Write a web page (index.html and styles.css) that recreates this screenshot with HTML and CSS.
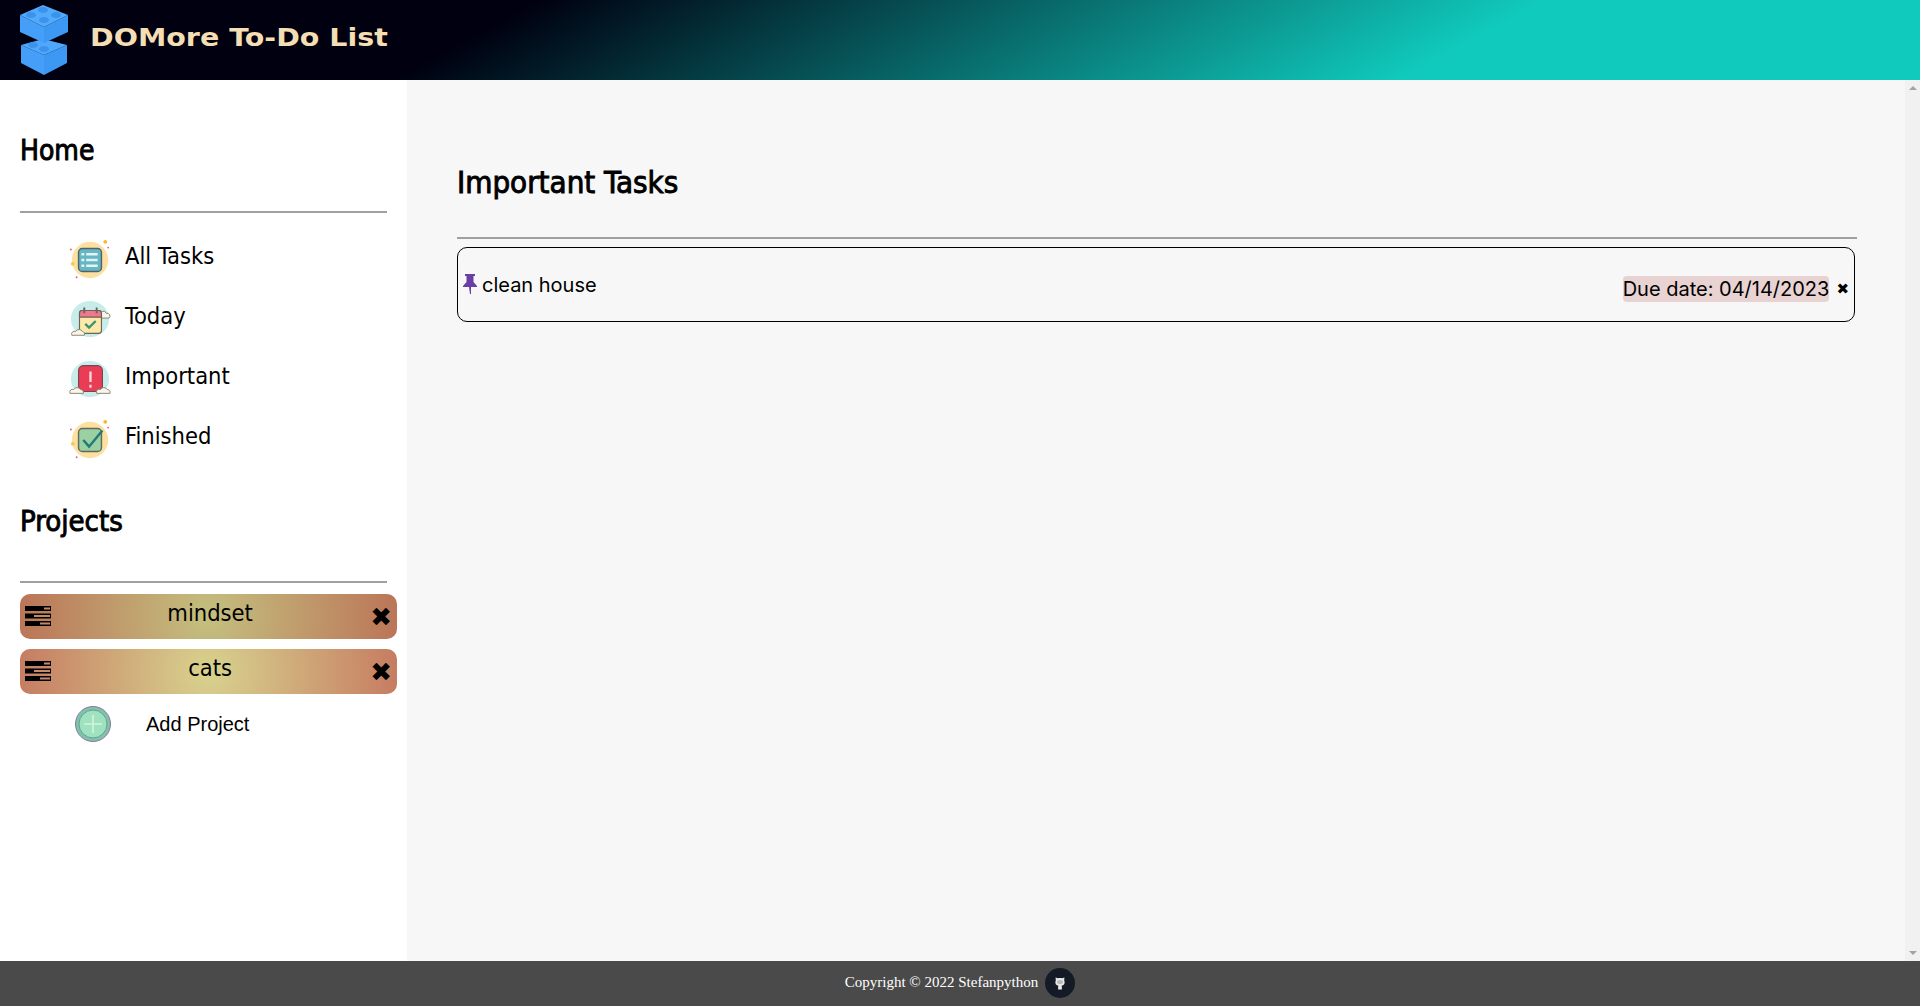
FILE: index.html
```html
<!DOCTYPE html>
<html lang="en">
<head>
    <meta charset="UTF-8">
    <title>DOMore To-Do List</title>
    <link rel="stylesheet" href="styles.css">
</head>
<body>

<!-- Header -->
<header class="header">
    <svg class="logo" viewBox="0 0 48 70" aria-hidden="true">
        <!-- Khoi duoi -->
        <path fill="#4fa8fb" d="M1 40 L23 34 L47 40 L24 50 Z"/>
        <path fill="#459ff8" d="M1 40 L24 50 V70 L1 58 Z"/>
        <path fill="#3d98f4" d="M47 40 L24 50 V70 L47 58 Z"/>
        <ellipse cx="13" cy="40" rx="5" ry="3" fill="#3b93ee"/>
        <ellipse cx="24" cy="44" rx="5" ry="3" fill="#3b93ee"/>
        <!-- Khoi tren -->
        <path fill="#459ff8" d="M0 10 L24 22 V38 L0 27 Z"/>
        <path fill="#3d98f4" d="M48 10 L24 22 V38 L48 27 Z"/>
        <path fill="#52aafb" d="M0 10 L23 0 L48 10 L24 22 Z"/>
        <ellipse cx="23" cy="5" rx="5" ry="3" fill="#3b93ee"/>
        <ellipse cx="11" cy="10" rx="5" ry="3" fill="#3b93ee"/>
        <ellipse cx="36" cy="10" rx="5" ry="3" fill="#3b93ee"/>
        <ellipse cx="24" cy="15" rx="5" ry="3" fill="#3b93ee"/>
    </svg>
    <h1 class="site-title">DOMore To-Do List</h1>
</header>

<div class="layout">
    <!-- Sidebar -->
    <nav class="sidebar">
        <h2 class="side-heading">Home</h2>
        <hr class="rule">
        <ul class="menu">
            <li class="menu-item">
                <svg class="menu-icon" viewBox="0 0 44 44">
                    <circle cx="22" cy="22" r="19" fill="#fde09f"/>
                    <circle cx="38" cy="3" r="2" fill="#f9b82a"/><circle cx="41" cy="9" r="1" fill="#ee5a72"/><circle cx="2" cy="11" r="1" fill="#ee5a72"/><circle cx="4" cy="26" r="2" fill="#f9c84a"/><circle cx="8" cy="40" r="1" fill="#ee5a72"/>
                    <rect x="10" y="10" width="24" height="24" rx="4" fill="#65b7c4" stroke="#53616b" stroke-width="1.5"/>
                    <path d="M18 16H30M18 22H30M18 28H30" stroke="#e4f4f4" stroke-width="2.5"/>
                    <path d="M13 16H16M13 22H16M13 28H16" stroke="#e4f4f4" stroke-width="2.5"/>
                </svg>
                <span>All Tasks</span>
            </li>
            <li class="menu-item">
                <svg class="menu-icon" viewBox="0 0 44 44">
                    <ellipse cx="22" cy="21" rx="20" ry="19" fill="#c7ecea"/>
                    <path d="M33 17a3 3 0 0 1 6-2 3 3 0 0 1 3 5H33Z" fill="#f8f6ea" stroke="#8a8270"/>
                    <rect x="11" y="12" width="23" height="24" rx="3" fill="#fdeaa8" stroke="#6b6458" stroke-width="1.2"/>
                    <path d="M11 19V15a3 3 0 0 1 3-3h17a3 3 0 0 1 3 3v4Z" fill="#f0778c" stroke="#6b6458" stroke-width="1.2"/>
                    <path d="M16 9V15M29 9V15" stroke="#6b6458" stroke-width="2"/>
                    <path d="M17 26l4 4 7-7" fill="none" stroke="#3f8f78" stroke-width="2.4"/>
                    <path d="M3 38a3 3 0 0 1 4-4 4 4 0 0 1 7 0 3 3 0 0 1 2 4Z" fill="#f8f6ea" stroke="#8a8270"/>
                </svg>
                <span>Today</span>
            </li>
            <li class="menu-item">
                <svg class="menu-icon" viewBox="0 0 44 44">
                    <ellipse cx="22" cy="21" rx="20" ry="19" fill="#c7ecea"/>
                    <rect x="10" y="7" width="25" height="27" rx="5" fill="#ea3c55" stroke="#7c4450" stroke-width="1.2"/>
                    <path d="M22.500 13V24M22.500 27V30" stroke="#f6dcdc" stroke-width="2.4"/>
                    <path d="M1 36a3 3 0 0 1 4-4 4 4 0 0 1 7 0 3 3 0 0 1 3 4Z" fill="#f8f6ea" stroke="#8a8270"/>
                    <path d="M29 36a3 3 0 0 1 4-4 4 4 0 0 1 7 0 3 3 0 0 1 3 4Z" fill="#f8f6ea" stroke="#8a8270"/>
                </svg>
                <span>Important</span>
            </li>
            <li class="menu-item">
                <svg class="menu-icon" viewBox="0 0 44 44">
                    <circle cx="22" cy="22" r="19" fill="#fde09f"/>
                    <circle cx="38" cy="3" r="2" fill="#f9b82a"/><circle cx="41" cy="9" r="1" fill="#ee5a72"/><circle cx="2" cy="11" r="1" fill="#ee5a72"/><circle cx="4" cy="26" r="2" fill="#f9c84a"/><circle cx="8" cy="40" r="1" fill="#ee5a72"/>
                    <rect x="10" y="10" width="24" height="24" rx="4" fill="#9bd0a2" stroke="#5e6a5e" stroke-width="1.5"/>
                    <path d="M15 22l6 7 14-17" fill="none" stroke="#237a78" stroke-width="2.6"/>
                </svg>
                <span>Finished</span>
            </li>
        </ul>

        <h2 class="side-heading projects-heading">Projects</h2>
        <hr class="rule">
        <div class="project project-dark">
            <svg class="project-icon" viewBox="0 0 26 20">
                <path d="M0 0H26V5H0ZM0 7.500H26V12.500H0ZM0 15H26V20H0Z" fill="#000"/>
                <path class="project-icon-bar" d="M19 1.500H25V3.500H19ZM9 9H25V11H9ZM15 16.500H25V18.500H15Z"/>
            </svg>
            <span class="project-name">mindset</span>
            <span class="project-close">✖</span>
        </div>
        <div class="project project-light">
            <svg class="project-icon" viewBox="0 0 26 20">
                <path d="M0 0H26V5H0ZM0 7.500H26V12.500H0ZM0 15H26V20H0Z" fill="#000"/>
                <path class="project-icon-bar" d="M19 1.500H25V3.500H19ZM9 9H25V11H9ZM15 16.500H25V18.500H15Z"/>
            </svg>
            <span class="project-name">cats</span>
            <span class="project-close">✖</span>
        </div>
        <div class="add-project">
            <svg class="add-icon" viewBox="0 0 36 36">
                <circle cx="18" cy="18" r="17.500" fill="#7fc4a8" stroke="#8b74a8" stroke-width="1"/>
                <circle cx="18" cy="18" r="14" fill="#9ee2bf" stroke="#6a9e94" stroke-width="1"/>
                <path d="M18 9V27M9 18H27" stroke="#d8f2de" stroke-width="1.600"/>
            </svg>
            <span>Add Project</span>
        </div>
    </nav>

    <!-- Noi dung chinh -->
    <main class="content">
        <h2 class="content-heading">Important Tasks</h2>
        <hr class="rule">
        <div class="task">
            <div class="task-left">
                <svg class="pin" viewBox="0 0 14 20">
                    <path d="M2 0H12V2H10.500V8L14 12V13H8V20H7L6 13H0V12L3.500 8V2H2Z" fill="#6a3fa5"/>
                </svg>
                <span>clean house</span>
            </div>
            <div class="task-right">
                <span class="due">Due date: 04/14/2023</span>
                <span class="task-close">✖</span>
            </div>
        </div>
    </main>
    <div class="scrollbar">
        <span class="arrow-up"></span>
        <span class="arrow-down"></span>
    </div>
</div>

<!-- Footer -->
<footer class="footer">
    <span>Copyright © 2022 Stefanpython</span>
    <span class="github">
        <svg viewBox="0 0 16 16" class="github-icon">
            <path fill="#e8e8e8" d="M3.800 5.800 3.600 2.400 6 3.300c1.300-.4 2.700-.4 4 0l2.400-.9-.2 3.400c.8 1.300.5 3.400-.8 4.300-.6.4-1.300.6-2 .7.300.3.500.7.500 1.200V14.500H6.100v-2.500c0-.5.2-.9.500-1.200-.7-.1-1.400-.3-2-.7-1.300-.9-1.600-3-.8-4.300Z"/>
            <ellipse cx="8" cy="7" rx="3" ry="2" fill="#b8b8b8"/>
        </svg>
    </span>
</footer>

</body>
</html>
```

FILE: styles.css
```css
* {
    box-sizing: border-box;
}

html, body {
    height: 100%;
}

body {
    margin: 0;
    display: flex;
    flex-direction: column;
    overflow: hidden;
    font-family: "DejaVu Sans", sans-serif;
    font-stretch: condensed;
    color: #000;
}

/* Header */
.header {
    height: 80px;
    flex: none;
    display: flex;
    align-items: center;
    padding-left: 20px;
    background: linear-gradient(151deg, #000010 26%, #10cbbd 75%);
}

.logo {
    width: 48px;
    height: 70px;
}

.site-title {
    margin: 0 0 5px 22px;
    font-family: "DejaVu Sans", sans-serif;
    font-stretch: normal;
    font-size: 25px;
    font-weight: 700;
    color: #f5deb3;
    transform: scaleX(1.14);
    transform-origin: left center;
}

.layout {
    flex: 1;
    display: flex;
    min-height: 0;
}

/* Sidebar */
.sidebar {
    width: 407px;
    flex: none;
    padding: 56px 10px 0 20px;
    background-color: #fff;
}

.side-heading {
    margin: 0;
    height: 30px;
    font-size: 28px;
    font-weight: 400;
    line-height: 30px;
    -webkit-text-stroke: 0.9px #000;
}

.rule {
    margin: 0;
    height: 2px;
    border: 0;
    background-color: #a0a0a0;
}

.sidebar .rule {
    width: 367px;
    margin-top: 45px;
}

.menu {
    list-style: none;
    margin: 13px 0 0 49px;
    padding: 0;
}

.menu-item {
    height: 60px;
    display: flex;
    align-items: center;
    gap: 14px;
    font-size: 23.500px;
}

.menu-icon {
    width: 42px;
    height: 42px;
    margin-top: 7px;
}

.projects-heading {
    margin-top: 40px;
    font-size: 29px;
}

.project {
    height: 45px;
    width: 377px;
    margin-top: 10px;
    display: flex;
    align-items: center;
    padding: 0 5px;
    border-radius: 10px;
}

.sidebar .rule + .project {
    margin-top: 11px;
}

.project-dark {
    background: radial-gradient(circle, #c4c07f 0%, #bb7558 100%);
}

.project-light {
    background: radial-gradient(circle, #d8d38e 0%, #c67c62 100%);
}

.project-icon {
    width: 26px;
    height: 20px;
    flex: none;
    margin-top: -1px;
}

.project-dark .project-icon-bar {
    fill: #c08a68;
}

.project-light .project-icon-bar {
    fill: #c98a6c;
}

.project-name {
    flex: 1;
    text-align: center;
    font-size: 23.500px;
    margin-top: -7px;
}

.project-close {
    font-stretch: normal;
    font-size: 26px;
    line-height: 30px;
    margin-top: 1px;
    padding-left: 1px;
}

.add-project {
    margin-top: 12px;
    margin-left: 55px;
    display: flex;
    align-items: center;
    gap: 35px;
    font-family: "Liberation Sans", sans-serif;
    font-stretch: normal;
    font-size: 20px;
}

.add-icon {
    width: 36px;
    height: 36px;
}

/* Noi dung chinh */
.content {
    flex: 1;
    padding: 84px 0 0 50px;
    background-color: #f7f7f7;
}

.content-heading {
    margin: 0;
    height: 36px;
    font-size: 31px;
    font-weight: 400;
    line-height: 36px;
    -webkit-text-stroke: 0.9px #000;
}

.content .rule {
    width: 1400px;
    margin-top: 37px;
}

.task {
    width: 1398px;
    height: 75px;
    margin-top: 8px;
    display: flex;
    justify-content: space-between;
    align-items: center;
    padding: 0 5px;
    border: 1px solid #000;
    border-radius: 10px;
    font-family: "Inter", sans-serif;
    font-stretch: normal;
    font-size: 20px;
}

.task-left {
    display: flex;
    align-items: center;
    gap: 5px;
}

.pin {
    width: 14px;
    height: 20px;
    margin-top: -2px;
}

.task-right {
    display: flex;
    align-items: center;
    gap: 7px;
    margin-top: 9px;
}

.due {
    padding: 0;
    height: 26px;
    line-height: 26px;
    border-radius: 4px;
    background-color: #e8d3d2;
}

.task-close {
    font-family: "DejaVu Sans", sans-serif;
    font-size: 15px;
}

/* Thanh cuon */
.scrollbar {
    width: 15px;
    flex: none;
    display: flex;
    flex-direction: column;
    justify-content: space-between;
    align-items: center;
    padding: 6px 0;
    background-color: #f1f1f1;
}

.arrow-up {
    border-left: 4px solid transparent;
    border-right: 4px solid transparent;
    border-bottom: 4px solid #a3a3a3;
}

.arrow-down {
    border-left: 4px solid transparent;
    border-right: 4px solid transparent;
    border-top: 4px solid #a3a3a3;
}

/* Footer */
.footer {
    height: 45px;
    flex: none;
    display: flex;
    justify-content: center;
    align-items: center;
    gap: 7px;
    padding-bottom: 2px;
    background-color: #4a4a4a;
    color: #fff;
    font-family: "Liberation Serif", serif;
    font-stretch: normal;
    font-size: 15px;
}

.github {
    width: 30px;
    height: 30px;
    display: flex;
    justify-content: center;
    align-items: center;
    border-radius: 50%;
    background-color: #151b26;
}

.github-icon {
    width: 16px;
    height: 16px;
}
```
